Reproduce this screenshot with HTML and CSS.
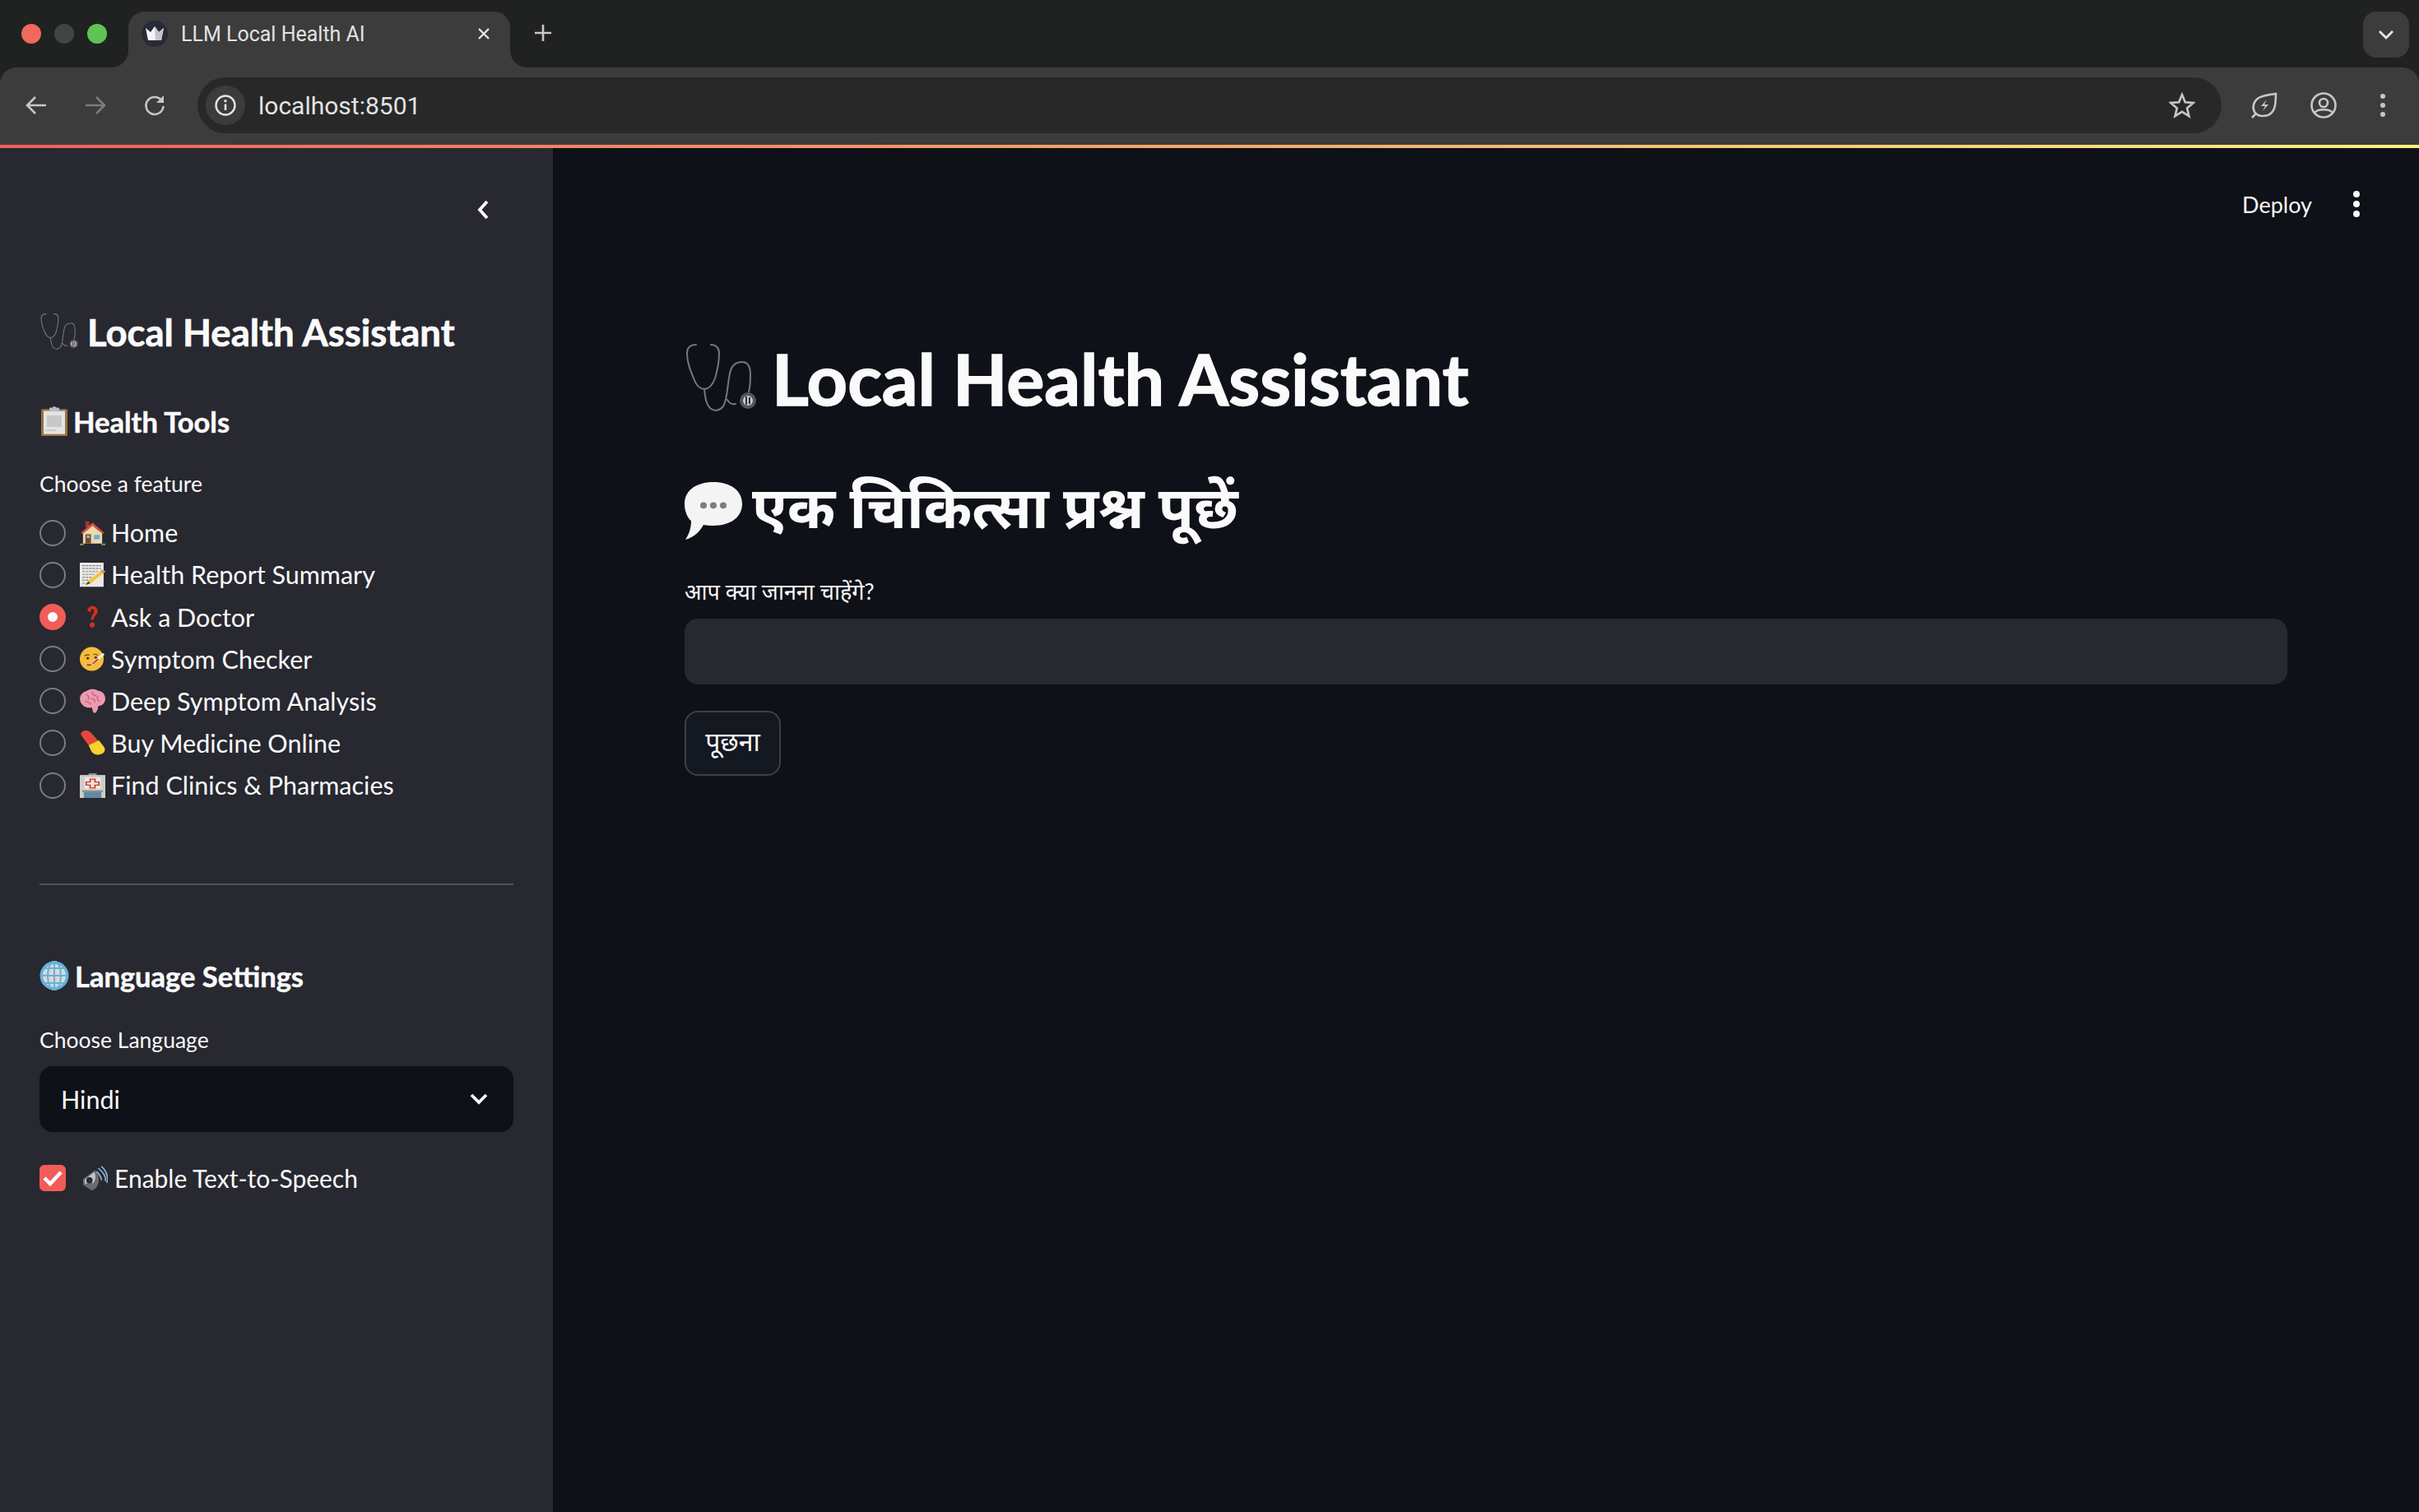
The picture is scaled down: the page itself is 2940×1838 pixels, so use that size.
FILE: index.html
```html
<!DOCTYPE html>
<html lang="en">
<head>
    <meta charset="UTF-8">
    <meta name="viewport" content="width=device-width, initial-scale=1.0">
    <title>LLM Local Health AI</title>
    <link rel="stylesheet" href="styles.css">
</head>
<body>
    <!-- shared emoji drawings -->
    <svg class="defs" width="0" height="0">
        <symbol id="e-steth" viewBox="0 0 88 86">
            <g fill="none" stroke="#77787c" stroke-width="2" stroke-linecap="round">
                <path d="M14 3C7 3 3 7 3 13C3 27 8 36 11 44C14 52 19 57 24 57C29 57 34 52 37 44C40 34 42 24 42 13C42 7 38 3 32 3"/>
                <path d="M24 57C25 66 26 76 32 81C38 85 45 82 48 76C52 68 52 52 55 38C57 28 63 24 70 24C78 24 80 32 80 40C80 48 80 54 78 60"/>
                <path d="M52 70C54 74 58 76 62 75"/>
            </g>
            <circle cx="77" cy="71" r="10" fill="#55565a"/>
            <circle cx="77" cy="71" r="6" fill="#c9c9cc"/>
            <path d="M75 66v10M79 67v8" stroke="#303136" stroke-width="2"/>
        </symbol>
        <symbol id="e-clip" viewBox="0 0 32 46" preserveAspectRatio="none">
            <rect x="0" y="4" width="32" height="42" rx="2" fill="#9a7440"/>
            <rect x="3" y="7" width="26" height="36" fill="#e4e4e4"/>
            <rect x="7" y="14" width="18" height="18" fill="#c8c8c8"/>
            <path d="M6 37h12" stroke="#c4c4c4" stroke-width="2"/>
            <rect x="10" y="2" width="12" height="6" rx="1" fill="#b9bcc2"/>
            <circle cx="16" cy="2" r="2" fill="#b9bcc2"/>
        </symbol>
        <symbol id="e-home" viewBox="0 0 32 40" preserveAspectRatio="none">
            <rect x="7" y="1" width="5" height="10" fill="#9c3a2a"/>
            <rect x="4" y="17" width="24" height="20" fill="#ecd9ae"/>
            <path d="M16 3L1 20L4 21L16 8L28 21L31 20Z" fill="#d9503c"/>
            <path d="M16 8L6 19H26Z" fill="#ecd9ae"/>
            <rect x="7" y="22" width="7" height="15" fill="#7a4a2c"/>
            <rect x="8.500" y="24" width="4" height="4" fill="#7fb7dd"/>
            <rect x="18" y="23" width="7" height="7" fill="#6fa9d6"/>
            <path d="M0 37h5v3H0ZM27 37h5v3h-5Z" fill="#5c9a45"/>
        </symbol>
        <symbol id="e-memo" viewBox="0 0 30 42" preserveAspectRatio="none">
            <rect x="0" y="0" width="28" height="41" fill="#e9e9e6"/>
            <path d="M3 5h22M3 10h22M3 15h18M3 20h14M3 25h12M3 30h8M3 35h10" stroke="#85868a" stroke-width="1.600" stroke-dasharray="3 1"/>
            <path d="M27 12L30 15L14 34L7 38L10 30Z" fill="#efc63f"/>
            <path d="M26 12L30 15L28 18L24 15Z" fill="#e08a84"/>
            <path d="M7 38L10 32L12 35Z" fill="#4a3a2c"/>
        </symbol>
        <symbol id="e-question" viewBox="0 0 20 34">
            <path d="M3 9C3 4 7 2 10 2C14 2 17 5 17 9C17 14 12 15 11 21H8C8 14 12 13 12 9C12 7 11 6 10 6C8 6 8 8 8 10Z" fill="#d42f26"/>
            <circle cx="9.500" cy="28" r="3.500" fill="#d42f26"/>
        </symbol>
        <symbol id="e-thermo" viewBox="0 0 32 34" preserveAspectRatio="none">
            <ellipse cx="15" cy="17" rx="15" ry="16.500" fill="#f5bd3c"/>
            <path d="M6 13c2-2 4-2 6-1M17 11c2-1 4 0 6 1" stroke="#7a4f1e" stroke-width="1.600" fill="none"/>
            <circle cx="10" cy="16" r="1.800" fill="#5a3a16"/>
            <circle cx="20" cy="15" r="1.800" fill="#5a3a16"/>
            <path d="M9 25c3 1 6 0 8-2" stroke="#7a4f1e" stroke-width="2" fill="none"/>
            <path d="M16 24L29 11" stroke="#e8e8ea" stroke-width="3.500" stroke-linecap="round"/>
            <path d="M16 24L23 17" stroke="#d8483c" stroke-width="2.500"/>
        </symbol>
        <symbol id="e-brain" viewBox="0 0 32 34" preserveAspectRatio="none">
            <path d="M9 3C13 0 19 0 23 3C28 3 32 8 32 14C32 20 28 24 23 24C23 28 22 31 19 34C16 33 16 29 15 26C11 27 6 26 3 22C0 19 -1 12 2 8C4 5 6 4 9 3Z" fill="#ec9ab0"/>
            <path d="M8 8c3 2 4 5 2 8M16 4c-1 4 2 6 5 6M23 10c-2 3-1 6 2 8M6 18c3 0 6 1 8 4M14 14c3 0 5 2 5 5" stroke="#c9637f" stroke-width="1.500" fill="none"/>
        </symbol>
        <symbol id="e-pill" viewBox="0 0 32 40" preserveAspectRatio="none">
            <path d="M3 10C-1 5 3 0 8 0C11 0 13 2 15 5L24 18L11 24Z" fill="#e5483a"/>
            <path d="M11 24L24 16L30 26C33 31 31 36 27 38C23 41 18 39 15 35Z" fill="#f6d32f"/>
        </symbol>
        <symbol id="e-hosp" viewBox="0 0 32 42" preserveAspectRatio="none">
            <rect x="11" y="0" width="10" height="4" fill="#8d8f93"/>
            <rect x="0" y="3" width="32" height="39" fill="#cfcdc8"/>
            <rect x="6" y="7" width="20" height="20" fill="#ece9e4"/>
            <path d="M13 10h6v5h5v5h-5v5h-6v-5H8v-5h5Z" fill="none" stroke="#d9352b" stroke-width="1.800"/>
            <rect x="5" y="31" width="22" height="11" fill="#5f8ba3"/>
            <rect x="3" y="29" width="26" height="3" fill="#8d8f93"/>
        </symbol>
        <symbol id="e-globe" viewBox="0 0 36 36">
            <circle cx="18" cy="18" r="17.500" fill="#64b1dc"/>
            <circle cx="18" cy="18" r="14" fill="#d8d9d8"/>
            <path d="M18 0V36M1 18H35M4 9H32M4 27H32" stroke="#64b1dc" stroke-width="2"/>
            <ellipse cx="18" cy="18" rx="8" ry="17.500" fill="none" stroke="#64b1dc" stroke-width="2"/>
        </symbol>
        <symbol id="e-speaker" viewBox="0 0 32 40" preserveAspectRatio="none">
            <path d="M1 21L16 7C20 12 22 20 20 28C19 33 16 37 12 39L1 30Z" fill="#6a6b70"/>
            <path d="M3 22L15 10C17 14 17 22 14 27L3 28Z" fill="#c2c4c9"/>
            <ellipse cx="9" cy="23" rx="4" ry="5" fill="#2a2b2e"/>
            <path d="M20 4C26 10 30 16 29 24M24 1C30 8 33 16 31 27M18 9C21 13 24 18 24 23" fill="none" stroke="#8fb0d4" stroke-width="1.800"/>
        </symbol>
        <symbol id="e-bubble" viewBox="0 0 70 74" preserveAspectRatio="none">
            <path d="M35 0C56 0 70 11 70 28C70 45 56 56 35 56C31 56 27 56 23 55C19 63 12 71 1 74C5 68 8 60 8 50C3 45 0 37 0 28C0 11 14 0 35 0Z" fill="#f4f4f4"/>
            <circle cx="23" cy="30" r="4" fill="#7d7d80"/>
            <circle cx="35" cy="30" r="4" fill="#7d7d80"/>
            <circle cx="47" cy="30" r="4" fill="#7d7d80"/>
        </symbol>
    </svg>

    <div class="browser-chrome">
        <div class="tab-strip">
            <div class="traffic-lights">
                <span class="light light-red"></span>
                <span class="light light-grey"></span>
                <span class="light light-green"></span>
            </div>
            <div class="tab">
                <span class="favicon">
                    <svg width="24" height="18" viewBox="0 0 24 18"><path d="M1 2L7 7L12 0L17 7L23 2L20 17H4Z" fill="#f4f4f4"/><path d="M12 0L17 7L23 2L20 17H13Z" fill="#c4c4c8"/></svg>
                </span>
                <span class="tab-title">LLM Local Health AI</span>
                <svg class="tab-close" width="16" height="16" viewBox="0 0 16 16"><path d="M2 2L14 14M14 2L2 14" stroke="#e6e6e6" stroke-width="2.400"/></svg>
            </div>
            <svg class="new-tab" width="24" height="24" viewBox="0 0 24 24"><path d="M12 2V22M2 12H22" stroke="#c8c8c8" stroke-width="2.600"/></svg>
            <div class="tab-search">
                <svg width="20" height="12" viewBox="0 0 20 12"><path d="M2 2L10 10L18 2" fill="none" stroke="#e6e6e6" stroke-width="2.800"/></svg>
            </div>
        </div>
        <div class="toolbar">
            <svg class="nav-icon" width="28" height="28" viewBox="0 0 28 28"><path d="M26 14H4M13 4L3 14L13 24" fill="none" stroke="#c7c7c7" stroke-width="2.600"/></svg>
            <svg class="nav-icon nav-off" width="28" height="28" viewBox="0 0 28 28"><path d="M2 14H24M15 4L25 14L15 24" fill="none" stroke="#7c7c7c" stroke-width="2.600"/></svg>
            <svg class="nav-icon" width="28" height="28" viewBox="0 0 28 28"><path d="M23 9A10.500 10.500 0 1 0 24.500 15" fill="none" stroke="#c7c7c7" stroke-width="2.600"/><path d="M25 2V11H16Z" fill="#c7c7c7"/></svg>
            <div class="omnibox">
                <span class="site-chip">
                    <svg width="28" height="28" viewBox="0 0 28 28"><circle cx="14" cy="14" r="11.500" fill="none" stroke="#e3e3e3" stroke-width="2.400"/><path d="M14 12.500V20" stroke="#e3e3e3" stroke-width="2.600"/><circle cx="14" cy="8.800" r="1.700" fill="#e3e3e3"/></svg>
                </span>
                <span class="url">localhost:8501</span>
                <svg class="star" width="32" height="32" viewBox="0 0 32 32"><path d="M16 3L19.800 12.300L29.800 13L22.100 19.400L24.500 29.200L16 23.900L7.500 29.200L9.900 19.400L2.200 13L12.200 12.300Z" fill="none" stroke="#c7c7c7" stroke-width="2.600"/></svg>
            </div>
            <svg class="tool-icon leaf" width="32" height="32" viewBox="0 0 32 32"><path d="M30 2C30 14 30 29 14 29C10 29 6 27 4 24C1 18 3 11 9 7C14 4 22 3 30 2Z" fill="none" stroke="#c7c7c7" stroke-width="2.600"/><path d="M1 31L6 26" stroke="#c7c7c7" stroke-width="2.600"/><path d="M19 9L12 17H17L14 23L21 15H16Z" fill="#c7c7c7"/></svg>
            <svg class="tool-icon profile" width="32" height="32" viewBox="0 0 32 32"><circle cx="16" cy="16" r="14.500" fill="none" stroke="#c7c7c7" stroke-width="2.600"/><circle cx="16" cy="13" r="5" fill="none" stroke="#c7c7c7" stroke-width="2.600"/><path d="M5 25C9 20 23 20 27 25" fill="none" stroke="#c7c7c7" stroke-width="2.600"/></svg>
            <div class="tool-icon kebab kebab-browser"><i></i><i></i><i></i></div>
        </div>
    </div>
    <div class="progress-line"></div>

    <div class="app">
        <aside class="sidebar">
            <div class="collapse-row">
                <svg width="16" height="26" viewBox="0 0 16 26"><path d="M13 3L4 13L13 23" fill="none" stroke="#fafafa" stroke-width="3.800"/></svg>
            </div>
            <h1 class="side-title">
                <svg class="emoji emoji-steth-small"><use href="#e-steth"/></svg>
                <span>Local Health Assistant</span>
            </h1>
            <h3 class="side-heading tools-heading">
                <svg class="emoji emoji-clip"><use href="#e-clip"/></svg>
                <span>Health Tools</span>
            </h3>
            <div class="field-label feature-label">Choose a feature</div>
            <ul class="radio-list">
                <li class="radio-row"><span class="radio"></span><svg class="emoji emoji-row"><use href="#e-home"/></svg><span>Home</span></li>
                <li class="radio-row"><span class="radio"></span><svg class="emoji emoji-row"><use href="#e-memo"/></svg><span>Health Report Summary</span></li>
                <li class="radio-row"><span class="radio radio-on"></span><svg class="emoji emoji-row"><use href="#e-question"/></svg><span>Ask a Doctor</span></li>
                <li class="radio-row"><span class="radio"></span><svg class="emoji emoji-row"><use href="#e-thermo"/></svg><span>Symptom Checker</span></li>
                <li class="radio-row"><span class="radio"></span><svg class="emoji emoji-row"><use href="#e-brain"/></svg><span>Deep Symptom Analysis</span></li>
                <li class="radio-row"><span class="radio"></span><svg class="emoji emoji-row"><use href="#e-pill"/></svg><span>Buy Medicine Online</span></li>
                <li class="radio-row"><span class="radio"></span><svg class="emoji emoji-row"><use href="#e-hosp"/></svg><span>Find Clinics &amp; Pharmacies</span></li>
            </ul>
            <hr class="divider">
            <h3 class="side-heading language-heading">
                <svg class="emoji emoji-globe"><use href="#e-globe"/></svg>
                <span>Language Settings</span>
            </h3>
            <div class="field-label language-label">Choose Language</div>
            <div class="select-box">
                <span>Hindi</span>
                <svg width="22" height="14" viewBox="0 0 22 14"><path d="M2 2L11 11L20 2" fill="none" stroke="#fafafa" stroke-width="3.800"/></svg>
            </div>
            <label class="check-row">
                <span class="checkbox">
                    <svg width="26" height="22" viewBox="0 0 26 22"><path d="M3 11L10 18L23 4" fill="none" stroke="#fff" stroke-width="4.400"/></svg>
                </span>
                <svg class="emoji emoji-speaker"><use href="#e-speaker"/></svg>
                <span>Enable Text-to-Speech</span>
            </label>
        </aside>

        <main class="main">
            <header class="app-header">
                <span class="deploy">Deploy</span>
                <div class="kebab kebab-app"><i></i><i></i><i></i></div>
            </header>
            <h1 class="page-title">
                <svg class="emoji emoji-steth-big"><use href="#e-steth"/></svg>
                <span>Local Health Assistant</span>
            </h1>
            <h2 class="page-subtitle" lang="hi">
                <svg class="emoji emoji-bubble"><use href="#e-bubble"/></svg>
                <span>एक चिकित्सा प्रश्न पूछें</span>
            </h2>
            <div class="field-label question-label" lang="hi">आप क्या जानना चाहेंगे?</div>
            <div class="text-input"></div>
            <button class="ask-button" lang="hi">पूछना</button>
        </main>
    </div>
</body>
</html>
```

FILE: styles.css
```css
* {
    box-sizing: border-box;
}

html, body {
    height: 100%;
}

body {
    margin: 0;
    display: flex;
    flex-direction: column;
    overflow: hidden;
    background-color: #0e1118;
    color: #fafafa;
    font-family: "Lato", "Noto Sans Devanagari", "Noto Sans", sans-serif;
}

.defs {
    position: absolute;
}

/* browser chrome */
.browser-chrome {
    height: 176px;
    background-color: #202221;
    font-family: "Roboto", "Liberation Sans", sans-serif;
}

.tab-strip {
    height: 82px;
    display: flex;
    align-items: flex-start;
    padding-top: 14px;
}

.traffic-lights {
    width: 156px;
    height: 54px;
    padding-left: 26px;
    display: flex;
    align-items: center;
    gap: 16px;
}

.light {
    width: 24px;
    height: 24px;
    border-radius: 50%;
}

.light-red {
    background-color: #f1685e;
}

.light-grey {
    background-color: #434544;
}

.light-green {
    background-color: #5fc454;
}

.tab {
    position: relative;
    width: 464px;
    height: 68px;
    padding: 0 24px 14px 16px;
    display: flex;
    align-items: center;
    background-color: #3c3c3c;
    border-radius: 20px 20px 0 0;
}

.tab::before,
.tab::after {
    content: "";
    position: absolute;
    bottom: 0;
    width: 20px;
    height: 20px;
}

.tab::before {
    left: -20px;
    background: radial-gradient(circle at 0 0, #202221 19.500px, #3c3c3c 20px);
}

.tab::after {
    right: -20px;
    background: radial-gradient(circle at 100% 0, #202221 19.500px, #3c3c3c 20px);
}

.favicon {
    width: 32px;
    height: 32px;
    border-radius: 50%;
    background-color: #282a36;
    display: flex;
    align-items: center;
    justify-content: center;
}

.tab-title {
    margin-left: 16px;
    font-size: 25px;
    color: #e3e3e3;
    white-space: nowrap;
}

.tab-close {
    margin-left: auto;
}

.new-tab {
    margin: 14px 0 0 28px;
}

.tab-search {
    margin-left: auto;
    margin-right: 12px;
    width: 56px;
    height: 56px;
    border-radius: 16px;
    background-color: #3c3c3c;
    display: flex;
    align-items: center;
    justify-content: center;
}

.toolbar {
    height: 94px;
    padding: 12px 0 14px 30px;
    display: flex;
    align-items: center;
    background-color: #3c3c3c;
    border-radius: 20px 20px 0 0;
}

.nav-icon {
    flex: none;
    margin-right: 44px;
}

.nav-icon + .omnibox {
    margin-left: -6px;
}

.omnibox {
    width: 2460px;
    height: 68px;
    padding: 0 32px 0 10px;
    display: flex;
    align-items: center;
    background-color: #282828;
    border-radius: 34px;
}

.site-chip {
    width: 48px;
    height: 48px;
    border-radius: 50%;
    background-color: #3c3c3c;
    display: flex;
    align-items: center;
    justify-content: center;
}

.url {
    margin-left: 16px;
    font-size: 30px;
    color: #e3e3e3;
}

.star {
    margin-left: auto;
}

.tool-icon {
    flex: none;
}

.leaf {
    margin-left: 36px;
}

.profile {
    margin-left: 40px;
}

.kebab {
    display: flex;
    flex-direction: column;
    align-items: center;
}

.kebab i {
    display: block;
    border-radius: 50%;
}

.kebab-browser {
    margin-left: 53px;
    gap: 5px;
}

.kebab-browser i {
    width: 6px;
    height: 6px;
    background-color: #c7c7c7;
}

.progress-line {
    height: 4px;
    background: linear-gradient(90deg, #f0605a, #fdf07f);
}

/* app layout */
.app {
    flex: 1;
    display: flex;
    min-height: 0;
}

.sidebar {
    width: 672px;
    flex: none;
    padding: 60px 48px 0;
    background-color: #272830;
}

.collapse-row {
    height: 30px;
    padding-right: 29px;
    display: flex;
    align-items: center;
    justify-content: flex-end;
}

.emoji {
    flex: none;
}

h1, h2, h3 {
    margin: 0;
    display: flex;
    align-items: center;
    font-weight: 700;
}

.side-title {
    margin-top: 103px;
    height: 60px;
    font-size: 45.500px;
    gap: 10px;
    -webkit-text-stroke: 0.7px #fafafa;
}

.emoji-steth-small {
    width: 48px;
    height: 46px;
}

.side-heading {
    height: 48px;
    font-size: 34.500px;
    gap: 7px;
    -webkit-text-stroke: 0.5px #fafafa;
}

.tools-heading {
    margin-top: 55px;
}

.emoji-clip {
    width: 32px;
    height: 36px;
    margin-left: 2px;
}

.field-label {
    height: 40px;
    display: flex;
    align-items: center;
    font-size: 26.500px;
}

.feature-label {
    margin-top: 32px;
}

.radio-list {
    list-style: none;
    margin: 14px 0 0;
    padding: 0;
}

.radio-row {
    height: 51.170px;
    display: flex;
    align-items: center;
    font-size: 30.500px;
    line-height: 1;
}

.radio {
    width: 32px;
    height: 32px;
    flex: none;
    margin-right: 17px;
    border-radius: 50%;
    border: 2.500px solid #7b7c81;
}

.radio-on {
    border: 10px solid #f25c58;
    background-color: #fafafa;
}

.emoji-row {
    width: 31px;
    height: 30px;
    margin-right: 7px;
}

.divider {
    margin: 94px 0 0;
    border: none;
    height: 2px;
    background-color: #4e5058;
}

.language-heading {
    margin-top: 86px;
}

.emoji-globe {
    width: 36px;
    height: 36px;
}

.language-label {
    margin-top: 34px;
}

.select-box {
    margin-top: 12px;
    height: 80px;
    padding: 0 31px 0 26px;
    display: flex;
    align-items: center;
    justify-content: space-between;
    background-color: #0e1118;
    border-radius: 16px;
    font-size: 30.500px;
}

.check-row {
    margin-top: 40px;
    height: 32px;
    display: flex;
    align-items: center;
    font-size: 30px;
}

.checkbox {
    width: 32px;
    height: 32px;
    flex: none;
    margin-right: 20px;
    border-radius: 6px;
    background-color: #f25c58;
    display: flex;
    align-items: center;
    justify-content: center;
}

.emoji-speaker {
    width: 31px;
    height: 31px;
    margin-right: 8px;
}

/* main column */
.main {
    flex: 1;
    padding: 20px 160px 0;
}

.app-header {
    height: 96px;
    margin-right: -88px;
    display: flex;
    align-items: center;
    justify-content: flex-end;
    gap: 50px;
}

.deploy {
    font-size: 27px;
}

.kebab-app {
    gap: 4px;
}

.kebab-app i {
    width: 8px;
    height: 8px;
    background-color: #fafafa;
}

.page-title {
    margin-top: 103px;
    height: 120px;
    font-size: 86.300px;
    gap: 18px;
    -webkit-text-stroke: 1.4px #fafafa;
}

.emoji-steth-big {
    width: 88px;
    height: 86px;
}

.page-subtitle {
    margin-top: 52px;
    height: 100px;
    font-size: 70.500px;
    gap: 12px;
}

.emoji-bubble {
    width: 70px;
    height: 70px;
}

.question-label {
    margin-top: 30px;
    font-size: 27px;
}

.text-input {
    margin-top: 11px;
    height: 80px;
    border-radius: 16px;
    background-color: #272830;
}

.ask-button {
    margin-top: 32px;
    display: block;
    width: 117px;
    height: 79px;
    padding: 0;
    border: 2px solid #3d3f47;
    border-radius: 16px;
    background-color: #141821;
    color: #fafafa;
    font-family: inherit;
    font-size: 32px;
}
```
